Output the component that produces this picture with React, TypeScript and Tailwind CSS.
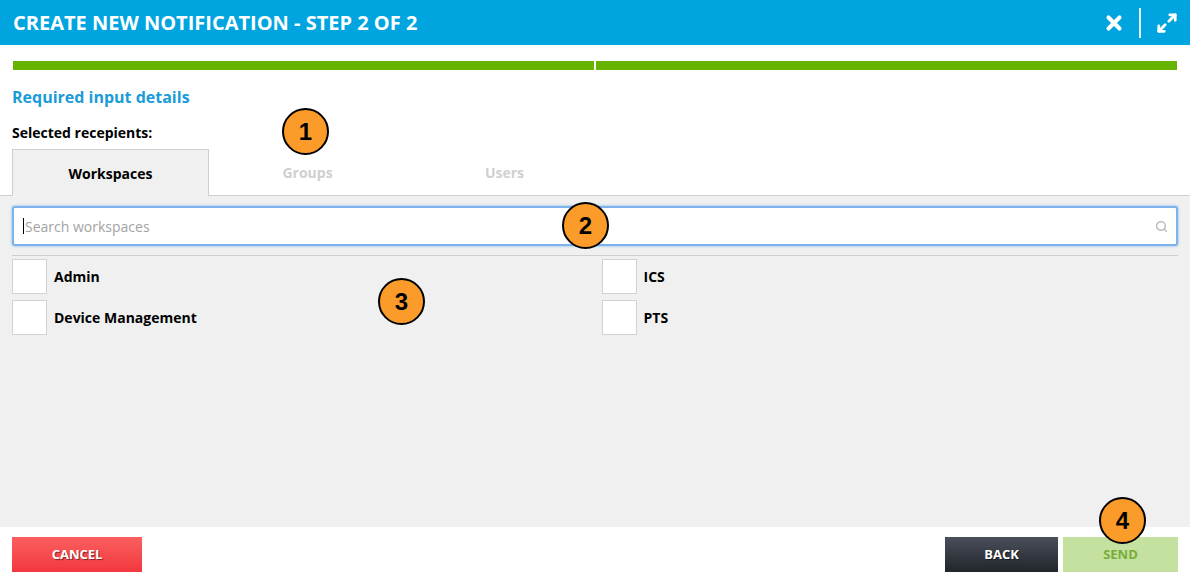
import React from "react";
import { X, Maximize2, Search } from "lucide-react";

const Badge = ({ n, className }: { n: number; className: string }) => (
  <div
    className={`absolute w-[47px] h-[47px] rounded-full bg-[#fb9b2a] border-2 border-black flex items-center justify-center text-[24px] font-bold text-black font-['Liberation_Sans',Arial,sans-serif] ${className}`}
  >
    {n}
  </div>
);

const CheckItem = ({ label }: { label: string }) => (
  <div className="flex items-center gap-[7px] h-[35px]">
    <div className="w-[35px] h-[35px] bg-white border border-[#d2d2d2]" />
    <span className="text-[14px] font-bold text-black">{label}</span>
  </div>
);

export default function App() {
  const tabs = ["Workspaces", "Groups", "Users"];

  return (
    <div className="relative w-[1190px] h-[577px] bg-white flex flex-col font-['Open_Sans',sans-serif] overflow-hidden">
      <header className="h-[45px] bg-[#00a5df] flex items-center pl-[13px] pr-[12px] shrink-0">
        <h1 className="text-white font-bold text-[20px] flex-1">
          CREATE NEW NOTIFICATION - STEP 2 OF 2
        </h1>
        <X className="text-white w-[22px] h-[22px] mr-[14px]" strokeWidth={4.5} />
        <div className="w-[2px] h-[30px] bg-white/90 mr-[15px]" />
        <Maximize2 className="text-white w-[22px] h-[22px]" strokeWidth={3} />
      </header>

      <div className="px-[13px] pt-[16px] flex gap-[2px]">
        <div className="flex-1 h-[9px] bg-[#66b300]" />
        <div className="flex-1 h-[9px] bg-[#66b300]" />
      </div>

      <div className="px-[12px] pt-[16px]">
        <p className="text-[#1a9cd8] font-bold text-[16px] leading-[22px]">Required input details</p>
        <p className="text-black font-bold text-[14px] leading-[18px] mt-[16px]">Selected recepients:</p>
      </div>

      <div className="flex px-[12px] mt-[7px] h-[46px] relative z-10">
        {tabs.map((t, i) => (
          <div
            key={t}
            className={`w-[197px] flex items-center justify-center text-[14px] font-bold ${
              i === 0
                ? "bg-[#f0f0f0] border border-b-0 border-[#cfcfcf] text-black h-[47px]"
                : "text-[#cfcfcf]"
            }`}
          >
            {t}
          </div>
        ))}
      </div>

      <div className="flex-1 bg-[#f0f0f0] border-t border-[#cfcfcf] px-[12px] pt-[10px]">
        <div className="h-[40px] bg-white border-2 border-[#7cb3ec] rounded-[3px] shadow-[0_0_3px_#7cb3ec] flex items-center pl-[9px] pr-[8px]">
          <span className="w-px h-[16px] bg-black mr-[1px]" />
          <span className="flex-1 text-[14px] text-[#a3a3a3]">Search workspaces</span>
          <Search className="w-[13px] h-[13px] text-[#b4b4b4]" strokeWidth={2.5} />
        </div>
        <div className="h-px bg-[#cfcfcf] mt-[9px]" />
        <div className="grid grid-cols-2 gap-y-[6px] mt-[3px] w-[1165px]">
          <CheckItem label="Admin" />
          <div className="pl-[7px]">
            <CheckItem label="ICS" />
          </div>
          <CheckItem label="Device Management" />
          <div className="pl-[7px]">
            <CheckItem label="PTS" />
          </div>
        </div>
      </div>

      <footer className="h-[50px] shrink-0 flex items-start pt-[10px] px-[12px]">
        <button className="w-[130px] h-[35px] bg-gradient-to-b from-[#fb5e5f] to-[#f2373d] text-white font-bold text-[13px] [text-shadow:1px_1px_1px_rgba(0,0,0,0.5)]">
          CANCEL
        </button>
        <div className="flex-1" />
        <button className="w-[113px] h-[35px] bg-gradient-to-b from-[#4a505b] to-[#22252b] text-white font-bold text-[13px] [text-shadow:1px_1px_1px_rgba(0,0,0,0.6)]">
          BACK
        </button>
        <button className="w-[115px] h-[35px] ml-[5px] bg-[#c5e19f] text-[#78ad3a] font-bold text-[13px]">
          SEND
        </button>
      </footer>

      <Badge n={1} className="left-[282px] top-[108px]" />
      <Badge n={2} className="left-[562px] top-[202px]" />
      <Badge n={3} className="left-[378px] top-[278px]" />
      <Badge n={4} className="left-[1099px] top-[497px]" />
    </div>
  );
}
